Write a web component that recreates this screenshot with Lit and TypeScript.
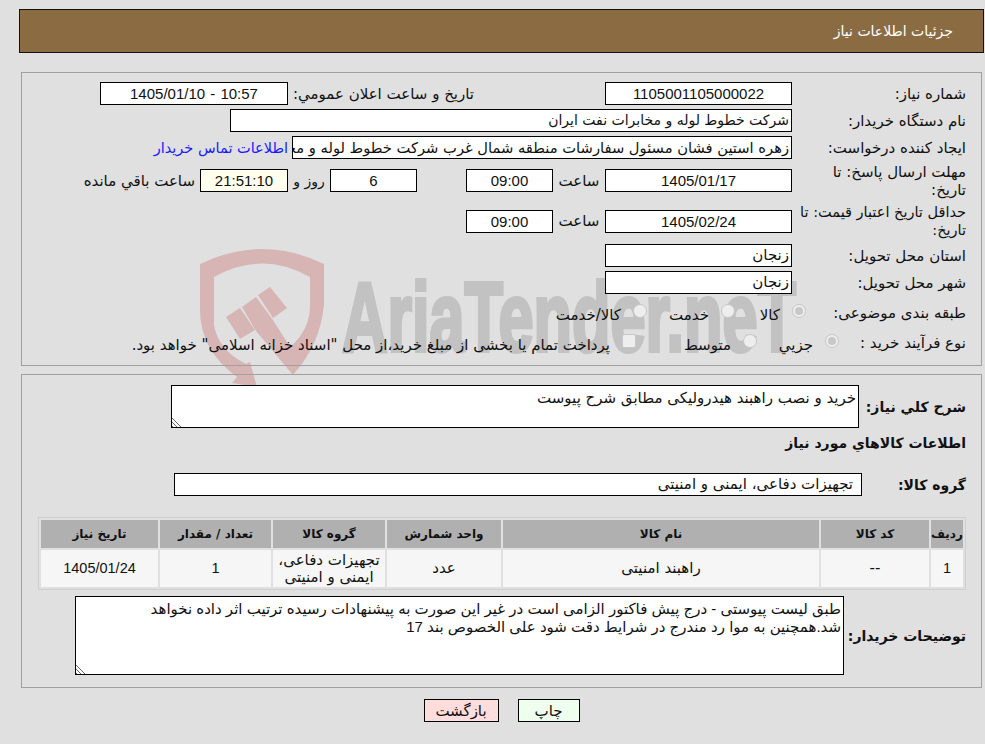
import { LitElement, html, css, svg } from "lit";
import { customElement } from "lit/decorators.js";

const cols = [
  ["ردیف", "1", 32, true],
  ["کد کالا", "--", 108, false],
  ["نام کالا", "راهبند امنیتی", 316, false],
  ["واحد شمارش", "عدد", 114, false],
  ["گروه کالا", "تجهیزات دفاعی، ایمنی و امنیتی", 112, false],
  ["تعداد / مقدار", "1", 111, true],
  ["تاریخ نیاز", "1405/01/24", 117, true],
] as const;

@customElement("app-root")
export class AppRoot extends LitElement {
  static styles = css`
    :host { display: block; position: relative; height: 744px; overflow: hidden; background: #e0e0e0; color: #111;
      font-family: "DejaVu Sans", sans-serif; font-size: 15px; }
    .wm { position: absolute; left: 0; top: 0; z-index: 0; }
    .wm text { font-family: "Liberation Sans", sans-serif; font-weight: 700; fill: #c2c2c2; stroke: #c2c2c2; stroke-width: 4px; }
    .page { position: relative; z-index: 1; direction: rtl; padding: 9px 1px 0 19px; }
    .num { font-family: "Liberation Sans", sans-serif; font-size: 15px; }
    .head { height: 44px; box-sizing: border-box; border: 1px solid #111; background: #8b6c42; color: #fff;
      display: flex; align-items: center; padding-right: 30px; font-size: 14px; }
    .panel { border: 1px solid #a0a0a0; margin: 19px 2px 0 2px; padding: 9px 15px 11px 0; }
    .panel.two { margin-top: 8px; padding: 10px 15px 12px 16px; }
    .rows { display: grid; row-gap: 4px; grid-template-rows: 23px 23px 23px 35px 38px 23px 23px 30px 22px; }
    .row { display: flex; align-items: center; min-width: 0; }
    .lab { width: 174px; flex: none; box-sizing: border-box; line-height: 18px; }
    .lab.wrap { padding-left: 8px; }
    .lab.narrow { font-size: 14.5px; }
    .lab.short { width: 127px; }
    .lab.mid { width: 160px; }
    .box { flex: none; box-sizing: border-box; height: 23px; line-height: 21px; border: 1px solid #000; background: #fff;
      overflow: hidden; white-space: nowrap; padding: 0 2px; }
    .c { text-align: center; }
    .w187 { width: 187px; } .w188 { width: 188px; word-spacing: 1px; } .w87 { width: 87px; } .w88 { width: 88px; }
    .w562 { width: 562px; font-size: 14px; } .w500 { width: 500px; font-size: 14.7px; }
    .cream { background: #ffffee; }
    .pubt { width: 317px; flex: none; box-sizing: border-box; padding-right: 131px; white-space: nowrap; }
    .hr { width: 52px; flex: none; text-align: center; }
    .sp49 { width: 49px; flex: none; }
    .day { width: 42px; flex: none; text-align: center; font-size: 14px; }
    .after { margin-right: 5px; white-space: nowrap; }
    a { color: #1a1aff; text-decoration: none; margin-right: 4px; white-space: nowrap; font-size: 14.5px; }
    .opt { display: flex; align-items: center; flex: none; }
    .r { flex: none; width: 14px; height: 14px; box-sizing: border-box; border-radius: 50%; border: 1px solid #c6c6c6;
      background: #eee; margin: 0 0 4px 12px; display: flex; align-items: center; justify-content: center; }
    .r.on::after { content: ""; width: 8px; height: 8px; border-radius: 50%; background: #c8c8c8; }
    .chk { flex: none; width: 14px; height: 14px; box-sizing: border-box; border-radius: 2px; border: 1px solid #c6c6c6;
      background: #eee; margin: 0 0 4px 12px; }
    .o71 { width: 71px; } .o88 { width: 88px; } .o82 { width: 82px; } .o121 { width: 121px; }
    .t { white-space: nowrap; padding-top: 4px; }
    .b { font-weight: 700; font-size: 14px; }
    .sec { display: flex; align-items: center; }
    .l107 { width: 107px; flex: none; } .l104 { width: 104px; flex: none; } .l122 { width: 122px; flex: none; }
    textarea { display: block; box-sizing: border-box; direction: rtl; border: 1px solid #000; border-radius: 0; background: #fff; color: #111;
      font: 15px/18px "DejaVu Sans", sans-serif; padding: 3px 2px 0 2px; margin: 0; outline: none; overflow: hidden; resize: both; }
    textarea::-webkit-resizer {
      background:
        linear-gradient(45deg, transparent 58%, #fff 58%) left bottom / 10px 10px no-repeat,
        repeating-linear-gradient(45deg, #666 0 1px, #fff 1px 3px) left bottom / 10px 10px no-repeat;
    }
    .ta1 { width: 688px; height: 43px; }
    .ta2 { width: 769px; height: 79px; font-family: "Liberation Sans", "DejaVu Sans", sans-serif; }
    .h2 { height: 20px; margin-top: 5px; line-height: 20px; }
    .grp { margin-top: 20px; }
    .w688 { width: 688px; padding-right: 8px; }
    table { table-layout: fixed; width: 928px; margin-top: 21px; border: 1px solid #cfcfcf; border-collapse: separate; border-spacing: 2px; }
    th { height: 28px; padding: 0; background: #b0b0b0; font-size: 12px; font-weight: 700; }
    td { height: 37px; padding: 0 2px; background: #f6f6f6; text-align: center; line-height: 17px; box-sizing: border-box; }
    td .num { font-size: 14.5px; }
    .buyer { margin-top: 6px; }
    .btns { display: flex; justify-content: center; gap: 19px; margin-top: 11px; }
    .btn { height: 23px; box-sizing: border-box; border: 1px solid #000; display: flex; align-items: center; justify-content: center; }
    .print { width: 62px; background: #eeffee; }
    .back { width: 75px; background: #ffdddd; }
  `;

  private mark() {
    return svg`<svg class="wm" width="985" height="744" viewBox="0 0 985 744">
      <g fill="#d7b5b5">
        <path d="M200 264 Q262 234 324 264 L324 305 Q320 345 293 375 L283 362 L290 347 Q310 330 310 305 L310 277 Q262 250 214 277 L214 325 Q218 350 246 364 L250 362 L257 387 L232 383 L237 377 Q200 350 200 310 Z"/>
        <path d="M226 317 L240 308 L255 330 L240 339 Z"/>
        <path d="M242 307 L256 297 L273 320 L290 347 L298 366 L293 375 L256 331 Z"/>
        <path d="M258 295 L270 287 L287 308 L273 318 Z"/>
      </g>
      <text x="342" y="351" font-size="98" textLength="454" lengthAdjust="spacingAndGlyphs">AriaTender.neT</text>
    </svg>`;
  }

  private tableHtml() {
    return html`<table>
      <colgroup>${cols.map((c) => html`<col style="width:${c[2]}px" />`)}</colgroup>
      <tr>${cols.map((c) => html`<th>${c[0]}</th>`)}</tr>
      <tr>${cols.map((c) => html`<td>${c[3] ? html`<span class="num">${c[1]}</span>` : c[1]}</td>`)}</tr>
    </table>`;
  }

  render() {
    return html`${this.mark()}
      <div class="page">
        <div class="head">جزئیات اطلاعات نیاز</div>
        <div class="panel"><div class="rows">
          <div class="row">
            <div class="lab">شماره نیاز:</div>
            <div class="box w187 c num">1105001105000022</div>
            <div class="pubt">تاریخ و ساعت اعلان عمومي:</div>
            <div class="box w188 c num" dir="ltr">1405/01/10 - 10:57</div>
          </div>
          <div class="row">
            <div class="lab">نام دستگاه خریدار:</div>
            <div class="box w562">شرکت خطوط لوله و مخابرات نفت ایران</div>
          </div>
          <div class="row">
            <div class="lab">ایجاد کننده درخواست:</div>
            <div class="box w500">زهره استین فشان مسئول سفارشات منطقه شمال غرب شرکت خطوط لوله و مخابرات نفت ایران</div>
            <a href="#">اطلاعات تماس خریدار</a>
          </div>
          <div class="row">
            <div class="lab wrap">مهلت ارسال پاسخ: تا تاریخ:</div>
            <div class="box w187 c num">1405/01/17</div>
            <div class="hr">ساعت</div>
            <div class="box w87 c num">09:00</div>
            <div class="sp49"></div>
            <div class="box w87 c num">6</div>
            <div class="day">روز و</div>
            <div class="box w88 c num cream">21:51:10</div>
            <div class="after">ساعت باقي مانده</div>
          </div>
          <div class="row">
            <div class="lab narrow">حداقل تاریخ اعتبار قیمت: تا تاریخ:</div>
            <div class="box w187 c num">1405/02/24</div>
            <div class="hr">ساعت</div>
            <div class="box w87 c num">09:00</div>
          </div>
          <div class="row">
            <div class="lab">استان محل تحویل:</div>
            <div class="box w187">زنجان</div>
          </div>
          <div class="row">
            <div class="lab">شهر محل تحویل:</div>
            <div class="box w187">زنجان</div>
          </div>
          <div class="row">
            <div class="lab mid">طبقه بندی موضوعی:</div>
            <div class="opt o71"><span class="r on"></span><span class="t">کالا</span></div>
            <div class="opt o88"><span class="r"></span><span class="t">خدمت</span></div>
            <div class="opt"><span class="r"></span><span class="t">کالا/خدمت</span></div>
          </div>
          <div class="row">
            <div class="lab short">نوع فرآیند خرید :</div>
            <div class="opt o82"><span class="r on"></span><span class="t">جزيي</span></div>
            <div class="opt o121"><span class="r"></span><span class="t">متوسط</span></div>
            <div class="opt"><span class="chk"></span><span class="t">پرداخت تمام یا بخشی از مبلغ خرید،از محل "اسناد خزانه اسلامی" خواهد بود.</span></div>
          </div>
        </div></div>
        <div class="panel two">
          <div class="sec">
            <div class="l107 b">شرح کلي نیاز:</div>
            <textarea class="ta1" readonly>خرید و نصب راهبند هیدرولیکی مطابق شرح پیوست</textarea>
          </div>
          <div class="h2 b">اطلاعات کالاهاي مورد نیاز</div>
          <div class="sec grp">
            <div class="l104 b">گروه کالا:</div>
            <div class="box w688">تجهیزات دفاعی، ایمنی و امنیتی</div>
          </div>
          ${this.tableHtml()}
          <div class="sec buyer">
            <div class="l122 b">توضیحات خریدار:</div>
            <textarea class="ta2" readonly>طبق لیست پیوستی - درج پیش فاکتور الزامی است در غیر این صورت به پیشنهادات رسیده ترتیب اثر داده نخواهد
شد.همچنین به موا رد مندرج در شرایط دقت شود علی الخصوص بند 17</textarea>
          </div>
        </div>
        <div class="btns">
          <div class="btn print">چاپ</div>
          <div class="btn back">بازگشت</div>
        </div>
      </div>`;
  }
}
